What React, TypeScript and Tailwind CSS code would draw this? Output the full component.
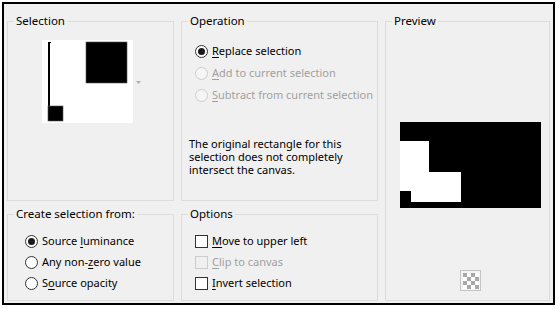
import React from "react";

const font = { fontFamily: '"Noto Sans", "Segoe UI", sans-serif' };

const U = ({ children }: { children: React.ReactNode }) => <span className="underline underline-offset-2">{children}</span>;

const Radio = ({ checked, disabled, tight, children }: { checked?: boolean; disabled?: boolean; tight?: boolean; children: React.ReactNode }) => (
    <div className={`flex items-center gap-[4px] whitespace-nowrap ${tight ? "h-[21px]" : "h-[22px]"} ${disabled ? "text-[#a0a0a0]" : "text-black"}`}>
        <span
            className={`w-[13px] h-[13px] rounded-full border flex items-center justify-center shrink-0 ${disabled ? "border-[#cccccc] bg-[#f5f5f5]" : "border-[#333333] bg-white"}`}
        >
            {checked && <span className="w-[7px] h-[7px] rounded-full bg-[#1a1a1a]" />}
        </span>
        <span>{children}</span>
    </div>
);

const Check = ({ disabled, children }: { disabled?: boolean; children: React.ReactNode }) => (
    <div className={`flex items-center gap-[4px] h-[21px] whitespace-nowrap ${disabled ? "text-[#a0a0a0]" : "text-black"}`}>
        <span className={`w-[13px] h-[13px] border shrink-0 ${disabled ? "border-[#cccccc] bg-[#f0f0f0]" : "border-[#333333] bg-white"}`} />
        <span>{children}</span>
    </div>
);

const Group = ({ title, className, children }: { title: string; className?: string; children: React.ReactNode }) => (
    <fieldset className={`border border-[#dcdcdc] min-w-0 ${className ?? ""}`}>
        <legend className="ml-[6px] px-[2px] leading-[16px] text-[11.5px] text-black">{title}</legend>
        {children}
    </fieldset>
);

export default function App() {
    return (
        <div className="w-[559px] h-[309px] bg-white text-[11px]" style={font}>
            <div className="absolute left-[2px] top-[2px] w-[553px] h-[303px] border-2 border-black bg-[#f0f0f0] shadow-[4px_4px_0_0_#ffffff,6px_6px_0_0_#000000]">
                <div className="grid grid-cols-[167px_197px_165px] grid-rows-[188px_95px] gap-x-[7px] gap-y-[5px] pl-[3px] pt-[9px]">
                    {/* Selection */}
                    <Group title="Selection">
                        <div className="pt-[11px] pl-[34px]">
                            <svg width="100" height="83" viewBox="0 0 100 83">
                                <rect x="0" y="0" width="91" height="83" fill="#ffffff" />
                                <rect x="6" y="2" width="2" height="65" fill="#000000" />
                                <rect x="6" y="2" width="3" height="1" fill="#000000" />
                                <rect x="44" y="2" width="41" height="41" fill="#000000" stroke="#555555" strokeWidth="0.6" />
                                <rect x="6" y="66" width="15" height="15" fill="#000000" stroke="#555555" strokeWidth="0.6" />
                                <path d="M94 41 L99 41 L96.5 44 Z" fill="#b0b0b0" />
                            </svg>
                        </div>
                    </Group>

                    {/* Operation */}
                    <Group title="Operation">
                        <div className="pt-[11px] pl-[7px]">
                            <div className="pl-[6px]">
                                <Radio checked><U>R</U>eplace selection</Radio>
                                <Radio disabled><U>A</U>dd to current selection</Radio>
                                <Radio disabled><U>S</U>ubtract from current selection</Radio>
                            </div>
                            <p className="mt-[31px] leading-[13px] text-black">
                                The original rectangle for this
                                <br />
                                selection does not completely
                                <br />
                                intersect the canvas.
                            </p>
                        </div>
                    </Group>

                    {/* Preview */}
                    <Group title="Preview" className="row-span-2">
                        <div className="pl-[14px] pt-[93px]">
                            <svg width="141" height="86" viewBox="0 0 141 86">
                                <rect x="0" y="0" width="141" height="86" fill="#000000" />
                                <rect x="0" y="19" width="29" height="50" fill="#ffffff" />
                                <rect x="11" y="50" width="50" height="30" fill="#ffffff" />
                            </svg>
                            <div className="mt-[62px] ml-[60px] w-[21px] h-[21px] border border-[#c4c4c4] p-[1.5px] bg-[#f4f4f4]">
                                <div className="grid grid-cols-4 grid-rows-4 w-[16px] h-[16px]">
                                    {Array.from({ length: 16 }).map((_, i) => (
                                        <span key={i} className={(Math.floor(i / 4) + i) % 2 === 0 ? "bg-[#a8a8a8]" : "bg-white"} />
                                    ))}
                                </div>
                            </div>
                        </div>
                    </Group>

                    {/* Create selection from */}
                    <Group title="Create selection from:">
                        <div className="pt-[9px] pl-[17px]">
                            <Radio checked tight>Source <U>l</U>uminance</Radio>
                            <Radio tight>Any non-<U>z</U>ero value</Radio>
                            <Radio tight>S<U>o</U>urce opacity</Radio>
                        </div>
                    </Group>

                    {/* Options */}
                    <Group title="Options">
                        <div className="pt-[9px] pl-[13px]">
                            <Check><U>M</U>ove to upper left</Check>
                            <Check disabled><U>C</U>lip to canvas</Check>
                            <Check><U>I</U>nvert selection</Check>
                        </div>
                    </Group>
                </div>
            </div>
        </div>
    );
}
